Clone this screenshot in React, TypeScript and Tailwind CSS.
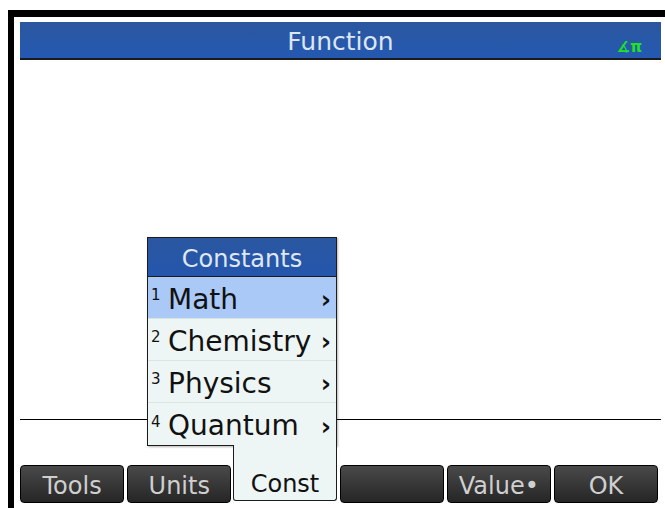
const keys = ["Tools", "Units", "", "", "Value•", "OK"];

const items = [
  { n: "1", label: "Math", active: true },
  { n: "2", label: "Chemistry", active: false },
  { n: "3", label: "Physics", active: false },
  { n: "4", label: "Quantum", active: false },
];

function SoftKey({ label, hidden }: { label: string; hidden?: boolean }) {
  if (hidden) return <div className="flex-1" />;
  return (
    <div className="flex h-[38px] flex-1 items-center justify-center rounded-[4px] border border-black bg-gradient-to-b from-[#4a4a4a] to-[#262626] pt-[3px] text-[24px] text-[#cfcfcf]">
      {label}
    </div>
  );
}

function ConstMenu() {
  return (
    <div className="absolute left-[133px] top-[220px] flex w-[190px] flex-col">
      <div className="border border-[#1c1c1c] bg-[#eef5f5] shadow-[1px_1px_2px_rgba(0,0,0,0.3)]">
        <div className="flex h-[39px] items-center justify-center border-b border-[#1c1c1c] bg-gradient-to-b from-[#2b57a0] to-[#2456ad] pt-[3px] text-[24px] text-[#dfe7f2]">
          Constants
        </div>
        {items.map((it, i) => (
          <div
            key={it.n}
            className={`flex h-[42px] items-center pl-[3px] pr-[5px] pt-[4px] ${
              it.active ? "bg-[#abc9f6]" : ""
            } ${i < items.length - 1 ? "border-b border-[#dbe4e4]" : ""}`}
          >
            <span className="mb-[8px] w-[17px] text-[15px] leading-none text-[#111]">{it.n}</span>
            <span className="flex-1 text-[28px] leading-none text-[#111]">{it.label}</span>
            <span className="text-[25px] font-bold leading-none text-[#111]">›</span>
          </div>
        ))}
      </div>
      <div className="-mt-px flex h-[56px] w-[104px] items-end self-end rounded-b-[3px] border-x border-b border-[#1c1c1c] bg-[#eef5f5]">
        <div className="flex h-[38px] w-full items-center justify-center pt-[6px] text-[24px] text-[#111]">Const</div>
      </div>
    </div>
  );
}

export default function App() {
  return (
    <div
      className="h-[508px] w-[665px] overflow-hidden bg-white pl-[8px] pt-[10px]"
      style={{ fontFamily: '"DejaVu Sans", sans-serif' }}
    >
      <div className="relative flex h-full flex-col border-l-[6px] border-t-[7px] border-black pl-[6px] pr-[4px] pt-[5px]">
        <div className="relative flex h-[38px] items-center justify-center border-b-2 border-[#1a1a1a] bg-gradient-to-b from-[#2b579e] to-[#2459b2] pt-[4px] text-[25px] text-[#dde6f0]">
          Function
          <span className="absolute bottom-[3px] right-[19px] text-[15px] font-bold leading-none text-[#1fe31f]">∡π</span>
        </div>
        <div className="h-[359px]" />
        <div className="h-px bg-black" />
        <div className="h-[45px]" />
        <div className="flex gap-[3px] pr-[3px]">
          {keys.map((k, i) => (
            <SoftKey key={i} label={k} hidden={i === 2} />
          ))}
        </div>
        <ConstMenu />
      </div>
    </div>
  );
}
